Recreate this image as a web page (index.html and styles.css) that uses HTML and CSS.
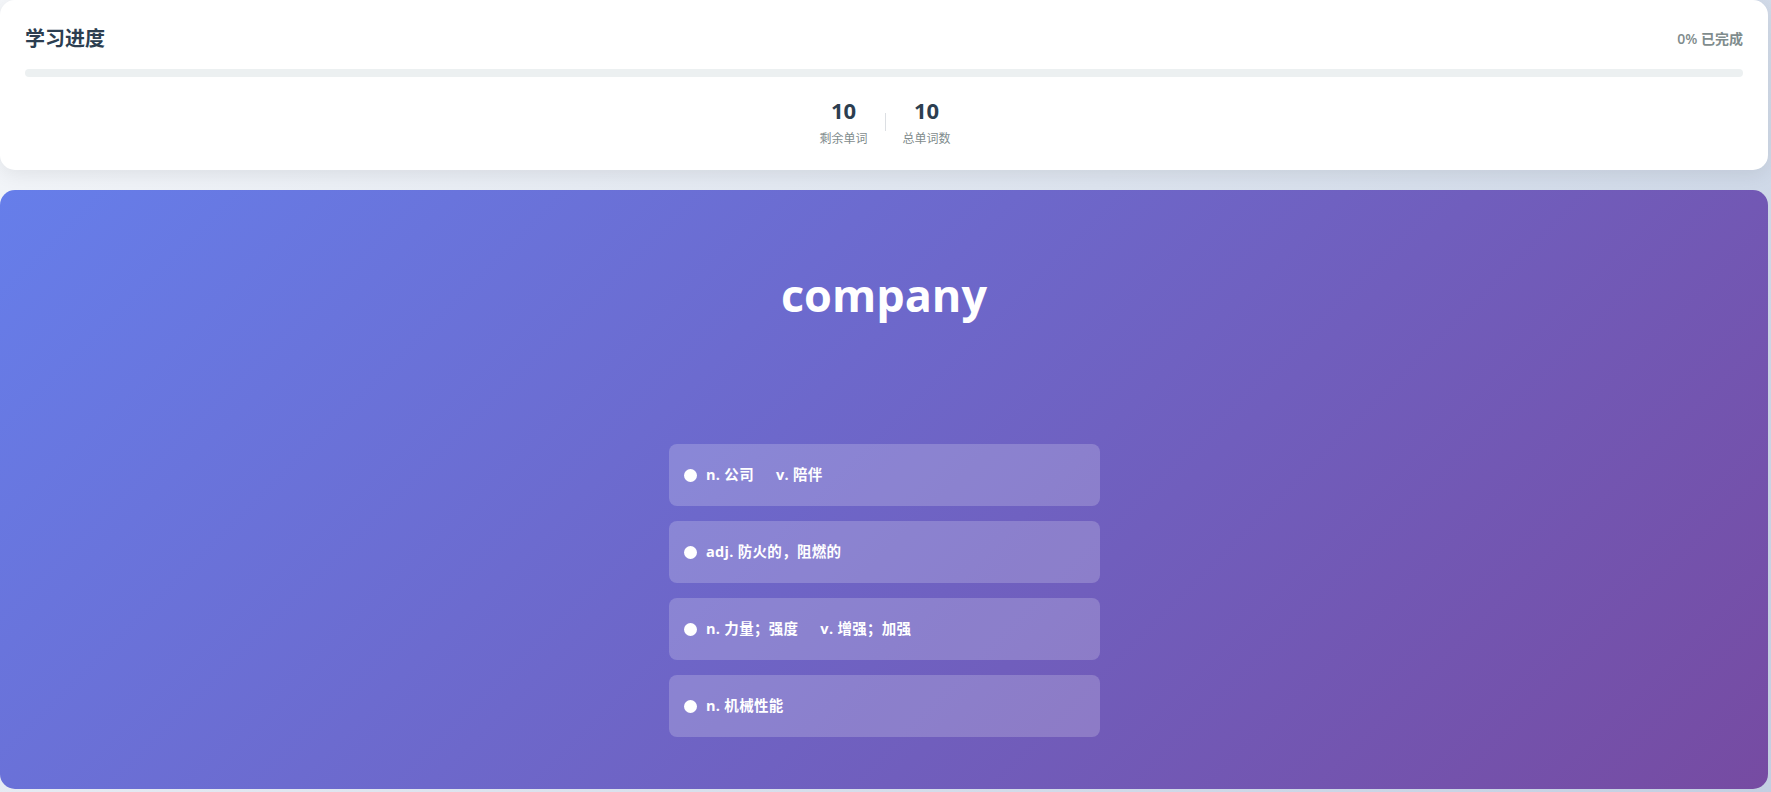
FILE: index.html
```html
<!DOCTYPE html>
<html lang="zh-CN">
<head>
<meta charset="utf-8">
<title>学习进度</title>
<link rel="stylesheet" href="styles.css">
</head>
<body>
<div class="page">
  <section class="progress-card">
    <div class="progress-header">
      <h2 class="progress-title">学习进度</h2>
      <span class="progress-percent">0% 已完成</span>
    </div>
    <div class="progress-track"><div class="progress-fill" style="width:0%"></div></div>
    <div class="stats">
      <div class="stat">
        <div class="stat-num">10</div>
        <div class="stat-label">剩余单词</div>
      </div>
      <div class="stat-divider"></div>
      <div class="stat">
        <div class="stat-num">10</div>
        <div class="stat-label">总单词数</div>
      </div>
    </div>
  </section>

  <section class="quiz-card">
    <h1 class="word">company</h1>
    <div class="options">
      <label class="option"><span class="radio"></span><span class="opt-text"><span class="pos-group">n. 公司</span>v. 陪伴</span></label>
      <label class="option"><span class="radio"></span><span class="opt-text">adj. 防火的，阻燃的</span></label>
      <label class="option"><span class="radio"></span><span class="opt-text"><span class="pos-group">n. 力量；强度</span>v. 增强；加强</span></label>
      <label class="option"><span class="radio"></span><span class="opt-text">n. 机械性能</span></label>
    </div>
  </section>
</div>
</body>
</html>
```
FILE: styles.css
```css
* { box-sizing: border-box; }

html, body { height: 100%; }

body {
  margin: 0;
  font-family: "Open Sans", "Noto Sans CJK SC", sans-serif;
  background: linear-gradient(135deg, #f5f7fa 0%, #c3cfe2 100%);
  overflow: hidden;
}

.page {
  width: 1768px;
  display: flex;
  flex-direction: column;
  gap: 20px;
}

.progress-card {
  background: #ffffff;
  border-radius: 15px;
  box-shadow: 0 4px 20px rgba(0, 0, 0, 0.08);
  padding: 25px 25px 22px;
  height: 170px;
}

.progress-header {
  display: flex;
  justify-content: space-between;
  align-items: center;
  height: 28px;
}

.progress-title {
  margin: 0;
  font-size: 20px;
  line-height: 28px;
  font-weight: 700;
  color: #2c3e50;
}

.progress-percent {
  font-size: 14px;
  line-height: 28px;
  color: #7f8c8d;
  font-weight: 600;
}

.progress-track {
  margin-top: 16px;
  height: 8px;
  background: #ecf0f1;
  border-radius: 4px;
  overflow: hidden;
}

.progress-fill {
  height: 100%;
  background: linear-gradient(90deg, #667eea, #764ba2);
}

.stats {
  margin-top: 19px;
  display: flex;
  justify-content: center;
  align-items: center;
  gap: 17px;
  padding-left: 2px;
}

.stat {
  display: flex;
  flex-direction: column;
  align-items: center;
}

.stat-num {
  font-size: 22px;
  line-height: 28px;
  font-weight: 700;
  color: #2c3e50;
}

.stat-label {
  margin-top: 6px;
  font-size: 12px;
  line-height: 18px;
  color: #7f8c8d;
}

.stat-divider {
  width: 1px;
  height: 18px;
  background: #dcdfe3;
}

.quiz-card {
  height: 599px;
  border-radius: 15px;
  background: linear-gradient(135deg, #667eea 0%, #764ba2 100%);
  display: flex;
  flex-direction: column;
  align-items: center;
  padding-top: 72px;
}

.word {
  margin: 0;
  font-size: 45px;
  line-height: 66px;
  font-weight: 700;
  color: #ffffff;
  letter-spacing: 0;
}

.options {
  margin-top: 116px;
  width: 431px;
  display: flex;
  flex-direction: column;
  gap: 15px;
  margin-left: 1px;
}

.option {
  height: 62px;
  display: flex;
  align-items: center;
  padding: 0 15px;
  background: rgba(255, 255, 255, 0.2);
  border-radius: 8px;
  color: #ffffff;
  cursor: pointer;
}

.radio {
  width: 13px;
  height: 13px;
  border-radius: 50%;
  background: #ffffff;
  flex: none;
}

.opt-text {
  margin-left: 9px;
  font-size: 14.5px;
  line-height: 20px;
  font-weight: 700;
  letter-spacing: 0.3px;
}

.pos-group {
  margin-right: 22px;
}
```
